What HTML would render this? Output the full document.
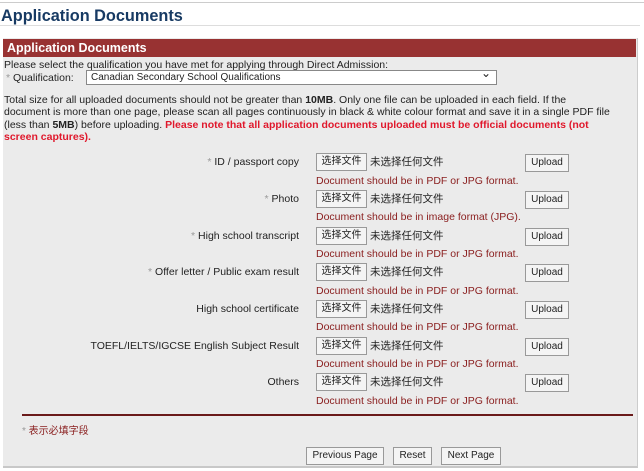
<!DOCTYPE html>
<html><head><meta charset="utf-8"><style>
*{margin:0;padding:0;box-sizing:border-box}
body{width:644px;height:471px;background:#fff;font-family:"Liberation Sans","Noto Sans CJK SC",sans-serif;font-size:10.5px;line-height:12px;color:#222;position:relative;overflow:hidden}
.a{position:absolute;white-space:nowrap}
.topl{position:absolute;left:0;top:2px;width:644px;height:1px;background:#ccc}
.title{left:1px;top:7px;font-size:16.3px;line-height:18px;font-weight:bold;color:#173a63}
.tl{position:absolute;left:0;top:25px;width:640px;height:1px;background:#ddd}
.panel{position:absolute;left:3px;top:38px;width:635px;height:430px;background:#ebebeb;border-right:1px solid #ccc;border-bottom:2px solid #c8c8c8}
.hdr{position:absolute;left:3px;top:39px;width:633px;height:18px;background:#983232;color:#fff;font-weight:bold;font-size:12.5px;line-height:14px;padding:2px 0 0 4px}
.sel{position:absolute;left:86px;top:70px;width:411px;height:15px;background:#fff;border:1px solid #888;font-size:10px;line-height:12px;padding:1px 0 0 4px}
.sel:after{content:"⌄";position:absolute;right:5px;top:-4px;font-size:12px}
.red{color:#e0182c;font-weight:bold}
.st{color:#999}
.lab{right:345px;text-align:right}
.btn{position:absolute;background:#f4f4f4;border:1px solid #999;font-size:10px;text-align:center;line-height:16px;height:18px}
.msg{color:#8b2020}
</style></head><body>
<div class="topl"></div>
<div class="a title">Application Documents</div>
<div class="tl"></div>
<div class="panel"></div>
<div class="hdr">Application Documents</div>
<div class="a" style="left:4px;top:59px">Please select the qualification you have met for applying through Direct Admission:</div>
<div class="a" style="left:6px;top:72px"><span class="st">*</span> Qualification:</div>
<div class="sel">Canadian Secondary School Qualifications</div>
<div class="a" style="left:4px;top:94px;line-height:12.3px">Total size for all uploaded documents should not be greater than <b>10MB</b>. Only one file can be uploaded in each field. If the<br>document is more than one page, please scan all pages continuously in black &amp; white colour format and save it in a single PDF file<br>(less than <b>5MB</b>) before uploading. <span class="red">Please note that all application documents uploaded must be official documents (not<br>screen captures).</span></div>

<div class="a lab" style="top:156px"><span class="st">*</span> ID / passport copy</div>
<div class="btn" style="left:316px;top:153px;width:51px">选择文件</div><div class="a" style="left:370px;top:156px">未选择任何文件</div>
<div class="btn" style="left:525px;top:154px;width:44px">Upload</div>
<div class="a msg" style="left:316px;top:175px">Document should be in PDF or JPG format.</div>

<div class="a lab" style="top:193px"><span class="st">*</span> Photo</div>
<div class="btn" style="left:316px;top:190px;width:51px">选择文件</div><div class="a" style="left:370px;top:193px">未选择任何文件</div>
<div class="btn" style="left:525px;top:191px;width:44px">Upload</div>
<div class="a msg" style="left:316px;top:211px">Document should be in image format (JPG).</div>

<div class="a lab" style="top:230px"><span class="st">*</span> High school transcript</div>
<div class="btn" style="left:316px;top:227px;width:51px">选择文件</div><div class="a" style="left:370px;top:230px">未选择任何文件</div>
<div class="btn" style="left:525px;top:228px;width:44px">Upload</div>
<div class="a msg" style="left:316px;top:248px">Document should be in PDF or JPG format.</div>

<div class="a lab" style="top:266px"><span class="st">*</span> Offer letter / Public exam result</div>
<div class="btn" style="left:316px;top:263px;width:51px">选择文件</div><div class="a" style="left:370px;top:266px">未选择任何文件</div>
<div class="btn" style="left:525px;top:264px;width:44px">Upload</div>
<div class="a msg" style="left:316px;top:285px">Document should be in PDF or JPG format.</div>

<div class="a lab" style="top:303px">High school certificate</div>
<div class="btn" style="left:316px;top:300px;width:51px">选择文件</div><div class="a" style="left:370px;top:303px">未选择任何文件</div>
<div class="btn" style="left:525px;top:301px;width:44px">Upload</div>
<div class="a msg" style="left:316px;top:321px">Document should be in PDF or JPG format.</div>

<div class="a lab" style="top:340px">TOEFL/IELTS/IGCSE English Subject Result</div>
<div class="btn" style="left:316px;top:337px;width:51px">选择文件</div><div class="a" style="left:370px;top:340px">未选择任何文件</div>
<div class="btn" style="left:525px;top:338px;width:44px">Upload</div>
<div class="a msg" style="left:316px;top:358px">Document should be in PDF or JPG format.</div>

<div class="a lab" style="top:376px">Others</div>
<div class="btn" style="left:316px;top:373px;width:51px">选择文件</div><div class="a" style="left:370px;top:376px">未选择任何文件</div>
<div class="btn" style="left:525px;top:374px;width:44px">Upload</div>
<div class="a msg" style="left:316px;top:395px">Document should be in PDF or JPG format.</div>

<div style="position:absolute;left:22px;top:414px;width:611px;height:2px;background:#6a1a1a"></div>
<div class="a msg" style="left:22px;top:426px;font-size:10px"><span class="st">*</span> 表示必填字段</div>
<div class="btn" style="left:306px;top:447px;width:78px">Previous Page</div>
<div class="btn" style="left:393px;top:447px;width:39px">Reset</div>
<div class="btn" style="left:441px;top:447px;width:60px">Next Page</div>
</body></html>
